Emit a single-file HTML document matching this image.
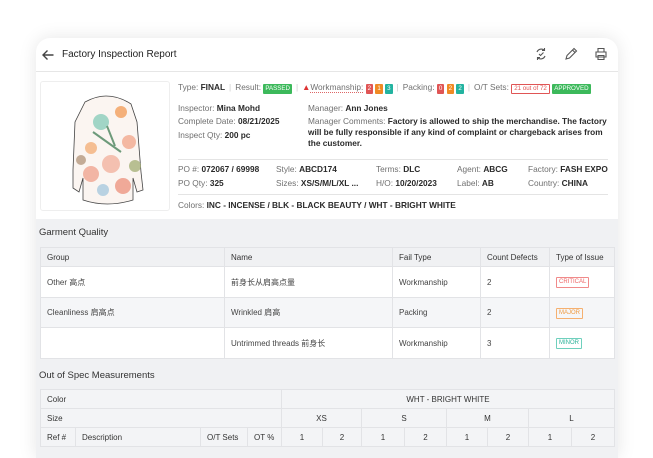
<!DOCTYPE html>
<html><head><meta charset="utf-8"><style>
*{margin:0;padding:0;box-sizing:border-box}
body{width:653px;height:438px;overflow:hidden;background:#fff;font-family:"Liberation Sans","Noto Sans CJK SC",sans-serif;color:#222;position:relative}
.card{position:absolute;left:36px;top:38px;width:582px;height:420px;border-radius:14px 14px 0 0;background:#f0f1f3;box-shadow:0 0 18px rgba(0,0,0,.10);overflow:hidden}
.hdr{position:absolute;left:0;top:0;width:582px;height:34px;background:#fff;border-bottom:1px solid #e6e6e6}
.info{position:absolute;left:0;top:34px;width:582px;height:147px;background:#fff}
.t{position:absolute;font-size:8.3px;white-space:nowrap;color:#2a2a2a}
.t b{font-weight:bold;color:#2a2a2a}
.g{color:#707070}
.bd{display:inline-block;font-size:6.2px;color:#fff;padding:1px 2px;line-height:8px;vertical-align:0px;border-radius:1px}
.sep{color:#ccc;margin:0 4px}
table{border-collapse:collapse;position:absolute;font-size:8px;color:#444}
td{border:1px solid #e2e3e6;padding:0 6px;white-space:nowrap}
.tag{display:inline-block;font-size:6px;padding:1px 2px;border:1px solid;border-radius:1px;line-height:7px}
</style></head><body>
<div class="card">
 <div class="hdr">
  <svg style="position:absolute;left:5px;top:10px" width="14" height="14" viewBox="0 0 14 14"><path d="M12.5 7H2M6.5 2.5L2 7l4.5 4.5" stroke="#444" stroke-width="1.4" fill="none"/></svg>
  <div class="t" style="left:26px;top:11px;font-size:10px;color:#222">Factory Inspection Report</div>
  <svg style="position:absolute;left:498px;top:9px" width="14" height="14" viewBox="0 0 14 14" fill="none" stroke="#555" stroke-width="1.1"><path d="M3 5a4.5 4.5 0 0 1 7.5-1.5M11 9a4.5 4.5 0 0 1-7.5 1.5M10.5 1v2.5H8M3.5 13v-2.5H6"/><path d="M5 7l1.5 1.5L9.5 5.5"/></svg>
  <svg style="position:absolute;left:528px;top:9px" width="14" height="14" viewBox="0 0 14 14" fill="none" stroke="#555" stroke-width="1.1"><path d="M2 12l1-3.5L10 1.5l2.5 2.5L5.5 11z M8.5 3l2.5 2.5"/></svg>
  <svg style="position:absolute;left:558px;top:9px" width="14" height="14" viewBox="0 0 14 14" fill="none" stroke="#555" stroke-width="1.1"><path d="M4 5V1.5h6V5M2 5h10v5H2zM4 8.5h6v4H4z"/></svg>
 </div>
 <div class="info">
  <div style="position:absolute;left:4px;top:9px;width:130px;height:130px;border:1px solid #eee;border-radius:3px;background:#fff">
   <svg width="130" height="130" viewBox="0 0 130 130">
    <path d="M44 20 Q55 14 65 14 Q78 14 90 22 L96 40 L100 90 L102 108 L96 110 L92 96 L92 118 Q66 126 42 118 L42 96 L38 110 L32 106 L32 88 L34 40 Z" fill="#fbf5f1" stroke="#444" stroke-width="0.8"/>
    <circle cx="60" cy="40" r="8" fill="#7bc8b4" opacity=".7"/><circle cx="80" cy="30" r="6" fill="#f4b07a"/>
    <circle cx="88" cy="60" r="7" fill="#f2a98f" opacity=".8"/><circle cx="50" cy="66" r="6" fill="#f4b07a" opacity=".8"/>
    <circle cx="70" cy="82" r="9" fill="#f3b3a0" opacity=".8"/><circle cx="50" cy="92" r="8" fill="#f2b5a4"/>
    <circle cx="82" cy="104" r="8" fill="#f0a998"/><circle cx="94" cy="84" r="6" fill="#a7b17a" opacity=".8"/>
    <circle cx="62" cy="108" r="6" fill="#a9c9df" opacity=".8"/><circle cx="40" cy="78" r="5" fill="#9e7a5a" opacity=".6"/>
    <path d="M52 50 L80 70 M66 44 L74 64" stroke="#6d9a7a" stroke-width="2"/>
   </svg>
  </div>
  <div class="t" style="left:142px;top:10px"><span class="g">Type:</span> <b>FINAL</b><span class="sep">|</span><span class="g">Result:</span> <span class="bd" style="background:#3cb95b">PASSED</span><span class="sep">|</span><span style="color:#d33">▲</span><span class="g" style="border-bottom:1px dotted #d66">Workmanship:</span> <span class="bd" style="background:#e05555">2</span> <span class="bd" style="background:#f08a24">1</span> <span class="bd" style="background:#22b3a0">3</span><span class="sep">|</span><span class="g">Packing:</span> <span class="bd" style="background:#e05555">0</span> <span class="bd" style="background:#f08a24">2</span> <span class="bd" style="background:#22b3a0">2</span><span class="sep">|</span><span class="g">O/T Sets:</span> <span class="bd" style="background:#fff;color:#e05555;border:1px solid #e05555;padding:0 2px">21 out of 72</span> <span class="bd" style="background:#3cb95b">APPROVED</span></div>
  <div class="t" style="left:142px;top:31px"><span class="g">Inspector:</span> <b>Mina Mohd</b></div>
  <div class="t" style="left:142px;top:44px"><span class="g">Complete Date:</span> <b>08/21/2025</b></div>
  <div class="t" style="left:142px;top:58px"><span class="g">Inspect Qty:</span> <b>200 pc</b></div>
  <div class="t" style="left:272px;top:31px"><span class="g">Manager:</span> <b>Ann Jones</b></div>
  <div class="t" style="left:272px;top:44px;white-space:normal;width:300px;line-height:11px"><span class="g">Manager Comments:</span> <b>Factory is allowed to ship the merchandise. The factory will be fully responsible if any kind of complaint or chargeback arises from the customer.</b></div>
  <div style="position:absolute;left:142px;top:87px;width:430px;border-top:1px solid #e4e4e4"></div>
  <div class="t" style="left:142px;top:92px"><span class="g">PO #:</span> <b>072067 / 69998</b></div>
  <div class="t" style="left:142px;top:106px"><span class="g">PO Qty:</span> <b>325</b></div>
  <div class="t" style="left:240px;top:92px"><span class="g">Style:</span> <b>ABCD174</b></div>
  <div class="t" style="left:240px;top:106px"><span class="g">Sizes:</span> <b>XS/S/M/L/XL ...</b></div>
  <div class="t" style="left:340px;top:92px"><span class="g">Terms:</span> <b>DLC</b></div>
  <div class="t" style="left:340px;top:106px"><span class="g">H/O:</span> <b>10/20/2023</b></div>
  <div class="t" style="left:421px;top:92px"><span class="g">Agent:</span> <b>ABCG</b></div>
  <div class="t" style="left:421px;top:106px"><span class="g">Label:</span> <b>AB</b></div>
  <div class="t" style="left:492px;top:92px"><span class="g">Factory:</span> <b>FASH EXPO</b></div>
  <div class="t" style="left:492px;top:106px"><span class="g">Country:</span> <b>CHINA</b></div>
  <div style="position:absolute;left:142px;top:122px;width:430px;border-top:1px solid #e4e4e4"></div>
  <div class="t" style="left:142px;top:128px"><span class="g">Colors:</span> <b>INC - INCENSE / BLK - BLACK BEAUTY / WHT - BRIGHT WHITE</b></div>
 </div>
 <div class="t" style="left:3px;top:189px;font-size:9.5px;color:#333">Garment Quality</div>
 <table style="left:4px;top:209px;width:575px">
  <tr style="height:19px;background:#f0f1f3;color:#333"><td style="width:184px">Group</td><td style="width:168px">Name</td><td style="width:88px">Fail Type</td><td style="width:69px">Count Defects</td><td>Type of Issue</td></tr>
  <tr style="height:31px;background:#fff"><td>Other 高点</td><td>前身长从肩高点量</td><td>Workmanship</td><td>2</td><td><span class="tag" style="color:#e66;border-color:#f08a8a">CRITICAL</span></td></tr>
  <tr style="height:30px;background:#f5f6f8"><td>Cleanliness 肩高点</td><td>Wrinkled 肩高</td><td>Packing</td><td>2</td><td><span class="tag" style="color:#f09a40;border-color:#f5b070">MAJOR</span></td></tr>
  <tr style="height:31px;background:#fff"><td></td><td>Untrimmed threads 前身长</td><td>Workmanship</td><td>3</td><td><span class="tag" style="color:#2bb39a;border-color:#6fd0bd">MINOR</span></td></tr>
 </table>
 <div class="t" style="left:3px;top:332px;font-size:9.5px;color:#333">Out of Spec Measurements</div>
 <table style="left:4px;top:351px;width:575px;background:#f3f4f6;color:#333">
  <tr style="height:19px"><td colspan="4">Color</td><td colspan="8" style="text-align:center">WHT - BRIGHT WHITE</td></tr>
  <tr style="height:19px"><td colspan="4">Size</td><td colspan="2" style="text-align:center">XS</td><td colspan="2" style="text-align:center">S</td><td colspan="2" style="text-align:center">M</td><td colspan="2" style="text-align:center">L</td></tr>
  <tr style="height:19px"><td style="width:35px">Ref #</td><td style="width:125px">Description</td><td style="width:47px">O/T Sets</td><td style="width:34px">OT %</td><td style="text-align:center;width:41px">1</td><td style="text-align:center;width:39px">2</td><td style="text-align:center;width:43px">1</td><td style="text-align:center;width:42px">2</td><td style="text-align:center;width:41px">1</td><td style="text-align:center;width:41px">2</td><td style="text-align:center;width:43px">1</td><td style="text-align:center">2</td></tr>
 </table>
</div>
</body></html>
